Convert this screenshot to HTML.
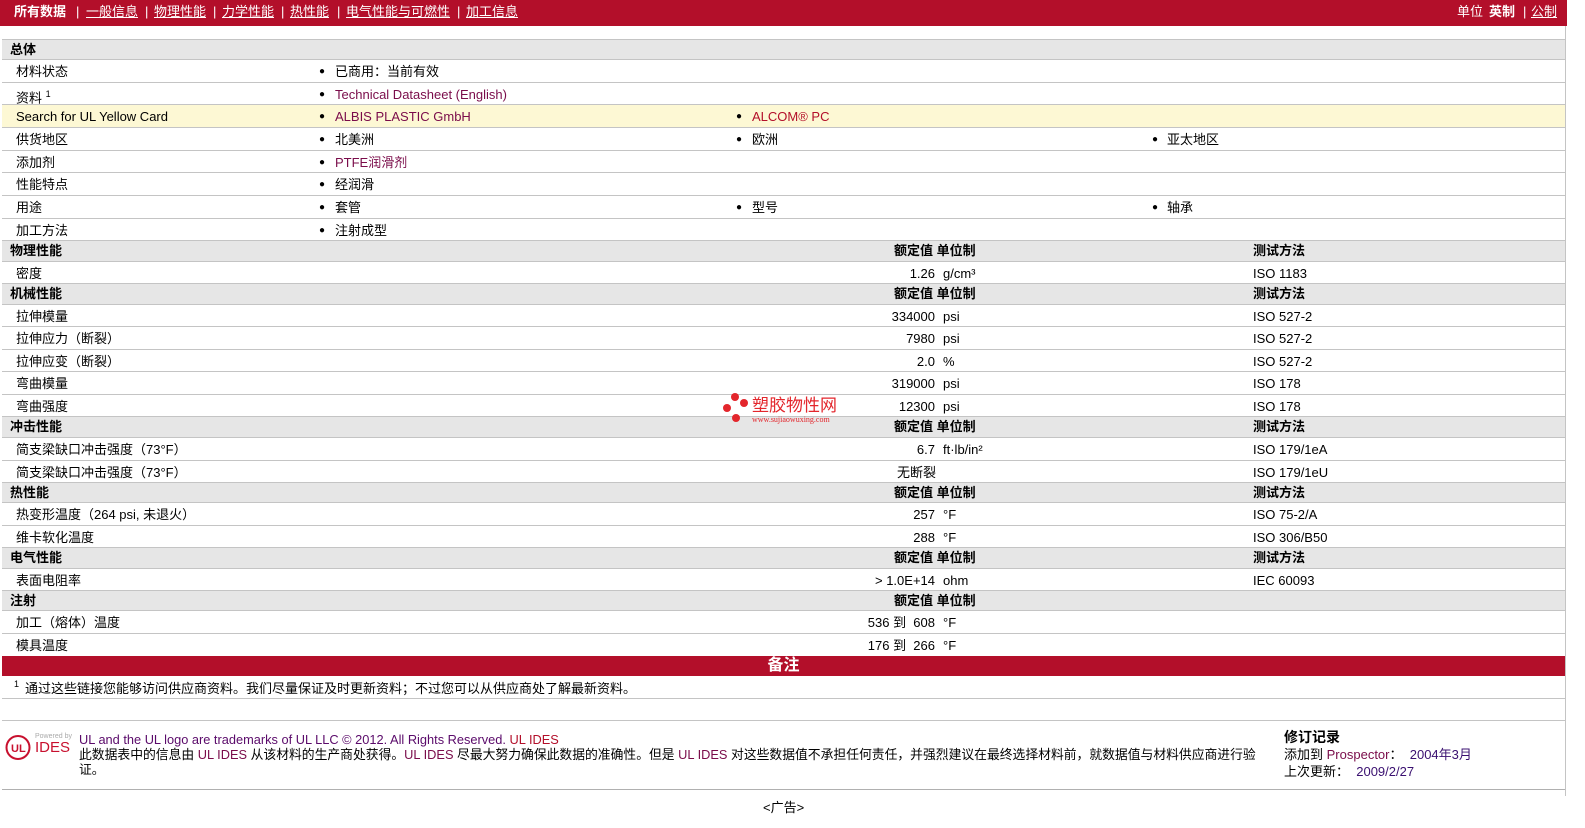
<!DOCTYPE html><html><head><meta charset="utf-8"><style>
*{margin:0;padding:0;box-sizing:border-box}
body{width:1585px;height:828px;background:#fff;font-family:"Liberation Sans","Noto Sans CJK SC",sans-serif;font-size:13px;color:#000;position:relative;overflow:hidden}
.a{position:absolute;white-space:nowrap;line-height:15px}
.r{position:absolute;left:2px;width:1563px;border-bottom:1px solid #c4c4c4}
.r .a{top:4px}
.h{background:#e6e6e6;font-weight:bold}
.h .a{top:2px}
.top{position:absolute;left:0;top:0;width:1567px;height:26px;background:#b30f2a;color:#fff;font-size:13px}
.top span{position:absolute;top:4px;line-height:16px}
.top u{text-decoration:underline}
.l{color:#7a0c4a}
i{font-style:normal;position:absolute;top:4px;font-size:10px;line-height:15px}
.ft{font-size:12.8px}
</style></head><body>
<div class="top">
<span style="left:14px;font-weight:bold">所有数据</span>
<span style="left:76px">|</span><span style="left:86px"><u>一般信息</u></span>
<span style="left:145px">|</span><span style="left:154px"><u>物理性能</u></span>
<span style="left:213px">|</span><span style="left:222px"><u>力学性能</u></span>
<span style="left:281px">|</span><span style="left:290px"><u>热性能</u></span>
<span style="left:337px">|</span><span style="left:346px"><u>电气性能与可燃性</u></span>
<span style="left:457px">|</span><span style="left:466px"><u>加工信息</u></span>
<span style="left:1457px">单位</span><span style="left:1489px;font-weight:bold">英制</span>
<span style="left:1523px">|</span><span style="left:1531px"><u>公制</u></span>
</div>
<div style="position:absolute;left:1565px;top:26px;width:1px;height:770px;background:#c4c4c4"></div>
<div style="position:absolute;left:2px;top:39px;width:1563px;height:1px;background:#c4c4c4"></div>

<div class="r h" style="top:40px;height:20px"><span class="a" style="left:8px">总体</span></div>
<div class="r" style="top:60px;height:23px"><span class="a" style="left:14px">材料状态</span><i style="left:317px">●</i><span class="a" style="left:333px">已商用：当前有效</span></div>
<div class="r" style="top:83px;height:22px"><span class="a" style="left:14px">资料 <sup style="font-size:9px">1</sup></span><i style="left:317px">●</i><span class="a l" style="left:333px">Technical Datasheet (English)</span></div>
<div class="r" style="top:105px;height:23px;background:#fdf8d4"><span class="a" style="left:14px">Search for UL Yellow Card</span><i style="left:317px">●</i><span class="a l" style="left:333px">ALBIS PLASTIC GmbH</span><i style="left:734px">●</i><span class="a" style="left:750px;color:#b30f2a">ALCOM® PC</span></div>
<div class="r" style="top:128px;height:23px"><span class="a" style="left:14px">供货地区</span><i style="left:317px">●</i><span class="a" style="left:333px">北美洲</span><i style="left:734px">●</i><span class="a" style="left:750px">欧洲</span><i style="left:1150px">●</i><span class="a" style="left:1165px">亚太地区</span></div>
<div class="r" style="top:151px;height:22px"><span class="a" style="left:14px">添加剂</span><i style="left:317px">●</i><span class="a l" style="left:333px">PTFE润滑剂</span></div>
<div class="r" style="top:173px;height:23px"><span class="a" style="left:14px">性能特点</span><i style="left:317px">●</i><span class="a" style="left:333px">经润滑</span></div>
<div class="r" style="top:196px;height:23px"><span class="a" style="left:14px">用途</span><i style="left:317px">●</i><span class="a" style="left:333px">套管</span><i style="left:734px">●</i><span class="a" style="left:750px">型号</span><i style="left:1150px">●</i><span class="a" style="left:1165px">轴承</span></div>
<div class="r" style="top:219px;height:22px"><span class="a" style="left:14px">加工方法</span><i style="left:317px">●</i><span class="a" style="left:333px">注射成型</span></div>

<div class="r h" style="top:241px;height:21px"><span class="a" style="left:892px">额定值 单位制</span><span class="a" style="left:8px">物理性能</span><span class="a" style="left:1251px">测试方法</span></div>
<div class="r" style="top:262px;height:22px"><span class="a" style="left:14px">密度</span><span class="a" style="right:630px">1.26</span><span class="a" style="left:941px">g/cm³</span><span class="a" style="left:1251px">ISO 1183</span></div>
<div class="r h" style="top:284px;height:21px"><span class="a" style="left:8px">机械性能</span><span class="a" style="left:892px">额定值 单位制</span><span class="a" style="left:1251px">测试方法</span></div>
<div class="r" style="top:305px;height:22px"><span class="a" style="left:14px">拉伸模量</span><span class="a" style="right:630px">334000</span><span class="a" style="left:941px">psi</span><span class="a" style="left:1251px">ISO 527-2</span></div>
<div class="r" style="top:327px;height:23px"><span class="a" style="left:14px">拉伸应力（断裂）</span><span class="a" style="right:630px">7980</span><span class="a" style="left:941px">psi</span><span class="a" style="left:1251px">ISO 527-2</span></div>
<div class="r" style="top:350px;height:22px"><span class="a" style="left:14px">拉伸应变（断裂）</span><span class="a" style="right:630px">2.0</span><span class="a" style="left:941px">%</span><span class="a" style="left:1251px">ISO 527-2</span></div>
<div class="r" style="top:372px;height:23px"><span class="a" style="left:14px">弯曲模量</span><span class="a" style="right:630px">319000</span><span class="a" style="left:941px">psi</span><span class="a" style="left:1251px">ISO 178</span></div>
<div class="r" style="top:395px;height:22px"><span class="a" style="left:14px">弯曲强度</span><span class="a" style="right:630px">12300</span><span class="a" style="left:941px">psi</span><span class="a" style="left:1251px">ISO 178</span></div>
<div class="r h" style="top:417px;height:21px"><span class="a" style="left:8px">冲击性能</span><span class="a" style="left:892px">额定值 单位制</span><span class="a" style="left:1251px">测试方法</span></div>
<div class="r" style="top:438px;height:23px"><span class="a" style="left:14px">简支梁缺口冲击强度（73°F）</span><span class="a" style="right:630px">6.7</span><span class="a" style="left:941px">ft·lb/in²</span><span class="a" style="left:1251px">ISO 179/1eA</span></div>
<div class="r" style="top:461px;height:22px"><span class="a" style="left:14px">简支梁缺口冲击强度（73°F）</span><span class="a" style="left:895px">无断裂</span><span class="a" style="left:1251px">ISO 179/1eU</span></div>
<div class="r h" style="top:483px;height:20px"><span class="a" style="left:8px">热性能</span><span class="a" style="left:892px">额定值 单位制</span><span class="a" style="left:1251px">测试方法</span></div>
<div class="r" style="top:503px;height:23px"><span class="a" style="left:14px">热变形温度（264 psi, 未退火）</span><span class="a" style="right:630px">257</span><span class="a" style="left:941px">°F</span><span class="a" style="left:1251px">ISO 75-2/A</span></div>
<div class="r" style="top:526px;height:22px"><span class="a" style="left:14px">维卡软化温度</span><span class="a" style="right:630px">288</span><span class="a" style="left:941px">°F</span><span class="a" style="left:1251px">ISO 306/B50</span></div>
<div class="r h" style="top:548px;height:21px"><span class="a" style="left:8px">电气性能</span><span class="a" style="left:892px">额定值 单位制</span><span class="a" style="left:1251px">测试方法</span></div>
<div class="r" style="top:569px;height:22px"><span class="a" style="left:14px">表面电阻率</span><span class="a" style="right:630px">&gt; 1.0E+14</span><span class="a" style="left:941px">ohm</span><span class="a" style="left:1251px">IEC 60093</span></div>
<div class="r h" style="top:591px;height:20px"><span class="a" style="left:8px">注射</span><span class="a" style="left:892px">额定值 单位制</span></div>
<div class="r" style="top:611px;height:23px"><span class="a" style="left:14px">加工（熔体）温度</span><span class="a" style="right:630px">536 到&nbsp;&nbsp;608</span><span class="a" style="left:941px">°F</span></div>
<div class="r" style="top:634px;height:22px;border:none"><span class="a" style="left:14px">模具温度</span><span class="a" style="right:630px">176 到&nbsp;&nbsp;266</span><span class="a" style="left:941px">°F</span></div>

<div style="position:absolute;left:2px;top:656px;width:1563px;height:20px;background:#b30f2a;color:#fff;font-weight:bold;font-size:16px;text-align:center;line-height:20px">备注</div>
<div class="r" style="top:676px;height:23px"><span class="a" style="left:12px;top:1px;font-size:9px">1</span><span class="a" style="left:23px;top:5px">通过这些链接您能够访问供应商资料。我们尽量保证及时更新资料；不过您可以从供应商处了解最新资料。</span></div>
<div class="r" style="top:699px;height:22px"></div>

<svg style="position:absolute;left:5px;top:734px" width="28" height="28"><circle cx="13" cy="13.5" r="11.5" fill="none" stroke="#c8102e" stroke-width="2"/><text x="6" y="18" font-family="Liberation Sans" font-weight="bold" font-size="11" fill="#c8102e">UL</text></svg>
<span class="a" style="left:35px;top:732px;font-size:7px;color:#aaa;line-height:9px">Powered by</span>
<span class="a" style="left:35px;top:739px;font-size:15px;color:#c8102e;line-height:17px">IDES</span>
<span class="a ft" style="left:79px;top:732px;color:#5a0a6a">UL and the UL logo are trademarks of UL LLC © 2012. All Rights Reserved. <span style="color:#b30f2a">UL IDES</span></span>
<span class="a ft" style="left:79px;top:747px">此数据表中的信息由 <span class="l">UL IDES</span> 从该材料的生产商处获得。<span class="l">UL IDES</span> 尽最大努力确保此数据的准确性。但是 <span class="l">UL IDES</span> 对这些数据值不承担任何责任，并强烈建议在最终选择材料前，就数据值与材料供应商进行验</span>
<span class="a ft" style="left:79px;top:762px">证。</span>
<span class="a" style="left:1284px;top:730px;font-weight:bold;font-size:14px">修订记录</span>
<span class="a" style="left:1284px;top:747px">添加到 <span class="l">Prospector</span>：&nbsp;&nbsp;<span style="color:#3a1070">2004年3月</span></span>
<span class="a" style="left:1284px;top:764px">上次更新：&nbsp;&nbsp;<span style="color:#3a1070">2009/2/27</span></span>
<div style="position:absolute;left:2px;top:789px;width:1563px;height:1px;background:#b0b0b0"></div>
<span class="a" style="left:763px;top:800px">&lt;广告&gt;</span>

<svg style="position:absolute;left:720px;top:392px" width="30" height="32"><circle cx="15" cy="5" r="4" fill="#e3262c"/><circle cx="24" cy="11" r="4" fill="#e3262c"/><circle cx="7" cy="16" r="4" fill="#e3262c"/><circle cx="16" cy="26" r="4" fill="#e3262c"/></svg>
<span class="a" style="left:752px;top:397px;font-size:17px;color:#e3262c;line-height:18px">塑胶物性网</span>
<span class="a" style="left:752px;top:415px;font-size:8px;color:#e3262c;font-family:'Liberation Serif',serif;line-height:9px">www.sujiaowuxing.com</span>
</body></html>
